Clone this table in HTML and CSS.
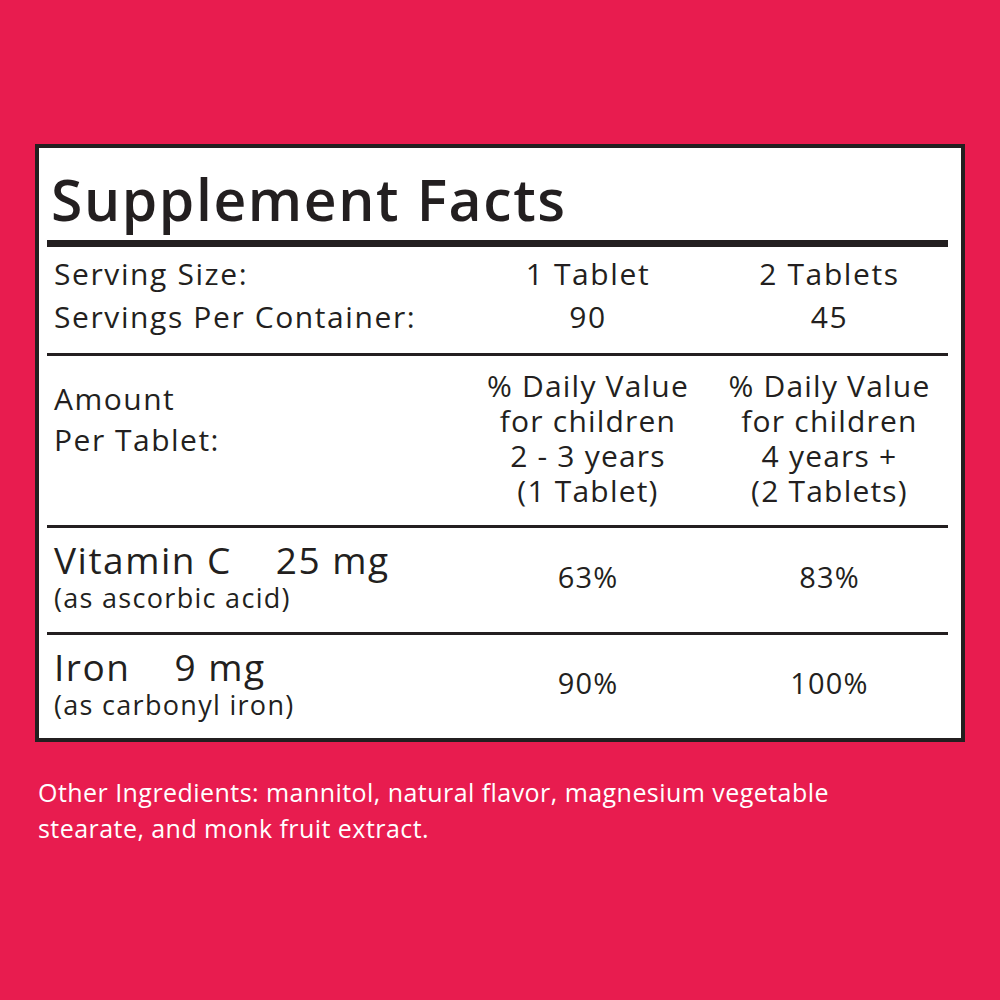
FILE: index.html
```html
<!DOCTYPE html>
<html lang="en">
  <head>
    <meta charset="UTF-8" />
    <title>Supplement Facts</title>
    <link rel="stylesheet" href="styles.css">
  </head>
  <body>
    <div class="label">
      <h1 class="title">Supplement Facts</h1>
      <div class="section serving">
        <div class="cell name">Serving Size:<br />Servings Per Container:</div>
        <div class="cell center">1 Tablet<br />90</div>
        <div class="cell center">2 Tablets<br />45</div>
      </div>
      <div class="section header">
        <div class="cell name amount">Amount<br />Per Tablet:</div>
        <div class="cell center dv">% Daily Value<br />for children<br />2 - 3 years<br />(1 Tablet)</div>
        <div class="cell center dv">% Daily Value<br />for children<br />4 years +<br />(2 Tablets)</div>
      </div>
      <div class="section nutrient">
        <div class="cell name">
          <div class="nutrient-name">Vitamin C<span class="dose">25 mg</span></div>
          <div class="nutrient-source">(as ascorbic acid)</div>
        </div>
        <div class="cell center value">63%</div>
        <div class="cell center value">83%</div>
      </div>
      <div class="section nutrient last">
        <div class="cell name">
          <div class="nutrient-name">Iron<span class="dose">9 mg</span></div>
          <div class="nutrient-source">(as carbonyl iron)</div>
        </div>
        <div class="cell center value">90%</div>
        <div class="cell center value">100%</div>
      </div>
    </div>
    <p class="other">
      Other Ingredients: mannitol, natural flavor, magnesium vegetable<br />
      stearate, and monk fruit extract.
    </p>
  </body>
</html>
```

FILE: styles.css
```css
:root {
  --brand: #e81c4f;
  --ink: #231f20;
  --paper: #ffffff;
}

* {
  box-sizing: border-box;
}

body {
  margin: 0;
  padding: 144px 35px 0;
  background: var(--brand);
  color: var(--ink);
  font-family: "Open Sans", Lato, sans-serif;
  min-height: 1000px;
}

.label {
  background: var(--paper);
  border: 4px solid var(--ink);
  padding: 0 13px 0 8px;
}

.title {
  margin: 0;
  height: 99px;
  padding-left: 4px;
  font-size: 57px;
  font-weight: 600;
  letter-spacing: 1.6px;
  line-height: 102px;
  border-bottom: 7px solid var(--ink);
}

.section {
  display: grid;
  grid-template-columns: 418px 246px 1fr;
  border-bottom: 3px solid var(--ink);
  font-size: 30px;
  letter-spacing: 1.2px;
}

.section.last {
  border-bottom: none;
}

.cell.name {
  padding-left: 7px;
}

.center {
  text-align: center;
}

.serving {
  height: 109px;
  padding-top: 5px;
  letter-spacing: 1.6px;
  line-height: 43px;
}

.header {
  height: 172px;
  padding-top: 12px;
  line-height: 35px;
}

.amount {
  padding-top: 10px;
  letter-spacing: 1.5px;
  line-height: 41px;
}

.nutrient {
  height: 107px;
  align-items: center;
}

.nutrient .name {
  padding-bottom: 4px;
}

.last {
  height: 103px;
}

.nutrient-name {
  font-size: 37px;
  letter-spacing: 1.5px;
  line-height: 40px;
}

.dose {
  margin-left: 44px;
}

.nutrient-source {
  font-size: 27px;
  letter-spacing: 1.3px;
  line-height: 36px;
}

.value {
  padding-bottom: 8px;
  font-size: 29px;
}

.other {
  margin: 32px 0 0 3px;
  color: var(--paper);
  font-size: 25px;
  letter-spacing: 0.45px;
  line-height: 36px;
}
```
